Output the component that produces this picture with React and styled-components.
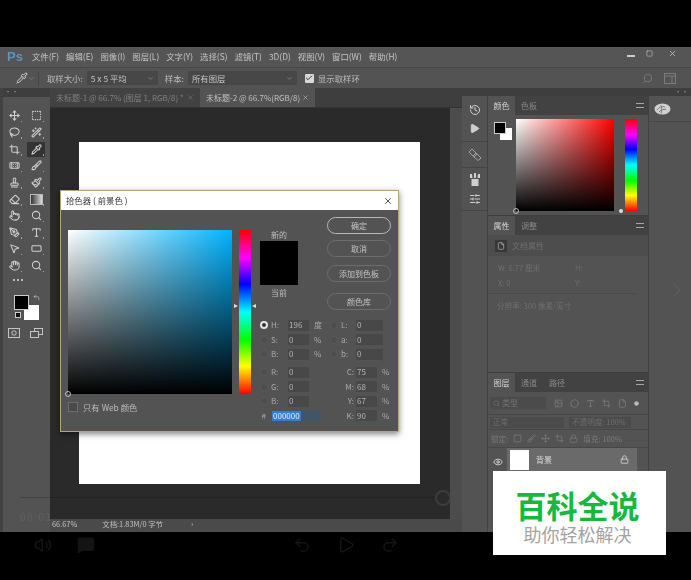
import * as React from 'react';
import styled, { createGlobalStyle } from 'styled-components';
import {
    Move, SquareDashed, Lasso, WandSparkles, Crop, Pipette, Bandage, Brush, Stamp, Paintbrush, Eraser,
    Pointer, Search, PenTool, Type, MousePointer2, RectangleHorizontal, Hand, Check, X, ChevronDown,
    Volume2, MessageSquare, Undo2, Redo2, Play, ChevronRight, Eye, Lock, File, Image, Circle, Square,
    History, SlidersHorizontal, CornerUpLeft,
} from 'lucide-react';

const cjk = `'Noto Sans CJK SC', 'Liberation Sans', sans-serif`;

const hueGradient = 'linear-gradient(180deg, #ff0000 0%, #ff00ff 17%, #0000ff 33%, #00ffff 50%, #00ff00 67%, #ffff00 83%, #ff0000 100%)';

const GlobalStyle = createGlobalStyle`
    html, body { margin: 0; padding: 0; background: #000; }
    body { font-family: ${cjk}; }
`;

const Page = styled.div`
    position: relative;
    width: 691px;
    height: 580px;
    background: #000;
    overflow: hidden;
    display: flex;
    flex-direction: column;
`;

const Shot = styled.div`
    position: relative;
    flex: none;
    padding-top: 47px;
    filter: blur(0.4px);
`;

const AppWindow = styled.div`
    height: 485px;
    display: flex;
    flex-direction: column;
    background: #535353;
    color: #c8c8c8;
    font-size: 8px;
    line-height: 1;
`;

const TitleBar = styled.div`
    height: 20px;
    flex: none;
    display: flex;
    align-items: center;
    padding: 0 0 2px 7px;
    box-sizing: border-box;
    background: #555;
`;

const PsLogo = styled.span`
    width: 25px;
    font: bold 13px 'Liberation Sans', sans-serif;
    color: #5f93ba;
`;

const MenuItem = styled.span`
    margin-right: 7px;
    font-size: 8.4px;
    color: #c4c4c4;
`;

const WindowButtons = styled.div`
    margin-left: auto;
    display: flex;
    align-items: center;
    gap: 11px;
    padding: 0 14px 6px 0;
    color: #c8c8c8;
`;

const MinimizeBar = styled.span`
    width: 8px;
    height: 2px;
    margin-top: 5px;
    background: #ccc;
`;

const CloseIcon = styled(X)`
    margin-left: 4px;
`;

const OptionsBar = styled.div`
    height: 21px;
    flex: none;
    display: flex;
    align-items: center;
    padding-left: 16px;
    background: #535353;
    border-top: 1px solid #484848;
    box-sizing: border-box;
`;

const OptionLabel = styled.span`
    margin: 0 4px 0 ${(p) => p.$left || 0}px;
    font-size: 8.4px;
    color: #bcbcbc;
    white-space: nowrap;
`;

const OptionSelect = styled.div`
    width: ${(p) => p.$width}px;
    height: 14px;
    box-sizing: border-box;
    display: flex;
    align-items: center;
    justify-content: space-between;
    padding: 0 4px;
    background: #474747;
    font-size: 8.4px;
    color: #c4c4c4;
`;

const OptionDivider = styled.span`
    width: 1px;
    height: 15px;
    margin: 0 8px 0 3px;
    background: #474747;
`;

const CheckBox = styled.span`
    width: 9px;
    height: 9px;
    margin: 0 4px 0 8px;
    display: flex;
    align-items: center;
    justify-content: center;
    border-radius: 1px;
    background: #d8d8d8;
    color: #333;
`;

const OptionTools = styled.div`
    margin-left: auto;
    display: flex;
    align-items: center;
    gap: 11px;
    padding-right: 15px;
    color: #7c7c7c;
`;

const FlippedSearch = styled(Search)`
    transform: scaleX(-1);
`;

const Workspace = styled.div`
    flex: 1;
    min-height: 0;
    display: flex;
    background: #424242;
`;

const ToolColumn = styled.div`
    width: 47px;
    flex: none;
    margin-left: 3px;
    background: #535353;
    display: flex;
    flex-direction: column;
`;

const Grip = styled.div`
    height: ${(p) => p.$height}px;
    flex: none;
    background: #3e3e3e;
    color: #aaa;
    font-size: 6px;
    line-height: 8px;
    text-align: ${(p) => p.$align || 'left'};
    letter-spacing: 1px;
    padding: 0 2px;
`;

const ToolGrid = styled.div`
    display: grid;
    grid-template-columns: 22px 22px;
    grid-auto-rows: 16.65px;
    padding-top: 10.5px;
`;

const ToolCell = styled.div`
    display: flex;
    align-items: center;
    justify-content: center;
    color: #d0d0d0;
    & > span {
        position: relative;
        width: 18px;
        height: 15px;
        display: flex;
        align-items: center;
        justify-content: center;
        background: ${(p) => (p.$active ? '#333' : 'transparent')};
    }
    & > span::after {
        content: '';
        position: absolute;
        right: 1px;
        bottom: 1px;
        width: 1.5px;
        height: 1.5px;
        background: #a0a0a0;
    }
`;

const GradientTool = styled.span`
    width: 11px;
    height: 9px;
    background: linear-gradient(90deg, #333, #ddd);
    border: 1px solid #bbb;
`;

const MoreDots = styled.div`
    height: 12px;
    padding-left: 10px;
    display: flex;
    gap: 2px;
    align-items: center;
    & > i {
        width: 2px;
        height: 2px;
        background: #ddd;
        border-radius: 50%;
    }
`;

const ColorWell = styled.div`
    position: relative;
    height: 27px;
    margin-top: 10px;
    flex: none;
`;

const Swatch = styled.div`
    position: absolute;
    left: ${(p) => p.$x}px;
    top: ${(p) => p.$y}px;
    width: ${(p) => p.$size}px;
    height: ${(p) => p.$size}px;
    background: ${(p) => p.$color};
    border: ${(p) => (p.$color === '#000' ? '1px solid #ccc' : 'none')};
    box-sizing: border-box;
`;

const SwapMark = styled.span`
    position: absolute;
    left: 30px;
    top: -2px;
    color: #ccc;
    line-height: 0;
`;

const ResetMark = styled.span`
    position: absolute;
    left: 12px;
    top: 16px;
    width: 6px;
    height: 6px;
    background: #111;
    border: 1px solid #ccc;
    box-sizing: border-box;
`;

const ModeRow = styled.div`
    margin-top: 5px;
    display: grid;
    grid-template-columns: 22px 22px;
    justify-items: center;
    color: #c4c4c4;
`;

const Center = styled.div`
    width: 412px;
    flex: none;
    display: flex;
    flex-direction: column;
`;

const TabRow = styled.div`
    height: 20px;
    flex: none;
    display: flex;
    align-items: stretch;
    background: #3e3e3e;
    border-bottom: 1px solid #333;
    box-sizing: border-box;
`;

const DocTab = styled.div`
    width: ${(p) => p.$width}px;
    box-sizing: border-box;
    display: flex;
    align-items: center;
    justify-content: space-between;
    padding: 0 6px;
    font-size: 8px;
    white-space: nowrap;
    background: ${(p) => (p.$active ? '#535353' : '#424242')};
    color: ${(p) => (p.$active ? '#c0c0c0' : '#808080')};
`;

const CanvasRow = styled.div`
    flex: 1;
    min-height: 0;
    display: flex;
    background: #4c4c4c;
`;

const CanvasArea = styled.div`
    width: 400px;
    box-sizing: border-box;
    padding: 34px 0 0 29px;
    background: #2a2a2a;
`;

const Document = styled.div`
    width: 341px;
    height: 342px;
    background: #fff;
`;

const StatusBar = styled.div`
    height: 13px;
    flex: none;
    display: flex;
    align-items: center;
    padding-bottom: 3px;
    box-sizing: border-box;
    background: #4a4a4a;
    font-size: 7.4px;
    color: #c0c0c0;
`;

const StatusText = styled.span`
    margin-left: ${(p) => p.$left}px;
`;

const RightDock = styled.div`
    flex: 1;
    min-width: 0;
    display: flex;
    flex-direction: column;
`;

const DockColumns = styled.div`
    flex: 1;
    min-height: 0;
    display: flex;
    gap: 1px;
`;

const IconStrip = styled.div`
    width: 25px;
    flex: none;
    background: #535353;
    display: flex;
    flex-direction: column;
`;

const StripGroup = styled.div`
    height: ${(p) => p.$height}px;
    display: flex;
    flex-direction: column;
    align-items: center;
    justify-content: center;
    gap: 7px;
    border-bottom: 1px solid #454545;
    color: #cfcfcf;
    box-sizing: border-box;
`;

const PanelColumn = styled.div`
    width: 160px;
    flex: none;
    display: flex;
    flex-direction: column;
    gap: 1px;
    background: #3e3e3e;
`;

const Panel = styled.div`
    height: ${(p) => (p.$height ? `${p.$height}px` : 'auto')};
    flex: ${(p) => (p.$height ? 'none' : 1)};
    min-height: 0;
    background: #535353;
    display: flex;
    flex-direction: column;
    overflow: hidden;
`;

const PanelHeader = styled.div`
    height: 19px;
    flex: none;
    display: flex;
    align-items: stretch;
    background: #424242;
    color: #8e8e8e;
`;

const PanelTab = styled.div`
    width: ${(p) => (p.$active ? 27 : 'auto')}px;
    padding: ${(p) => (p.$active ? '0' : '0 6px')};
    display: flex;
    align-items: center;
    justify-content: center;
    font-size: 8px;
    background: ${(p) => (p.$active ? '#535353' : 'transparent')};
    color: ${(p) => (p.$active ? '#d4d4d4' : '#888')};
`;

const PanelMenu = styled.div`
    margin-left: auto;
    width: 8px;
    align-self: center;
    margin-right: 4px;
    height: 5px;
    border-top: 1.5px solid #a8a8a8;
    border-bottom: 1.5px solid #a8a8a8;
    box-sizing: border-box;
`;

const ColorBody = styled.div`
    position: relative;
    flex: 1;
    display: flex;
    padding: 4px 0 0 28px;
`;

const ColorField = styled.div`
    position: relative;
    width: 98px;
    height: 92px;
    background: linear-gradient(180deg, transparent, #000), linear-gradient(90deg, #fff, #ff0000);
`;

const HueBar = styled.div`
    position: relative;
    width: ${(p) => p.$width}px;
    height: ${(p) => p.$height}px;
    margin-left: ${(p) => p.$left}px;
    flex: none;
    background: ${hueGradient};
`;

const HueDot = styled.span`
    position: absolute;
    left: -6px;
    bottom: -2px;
    width: 4px;
    height: 4px;
    border-radius: 50%;
    background: #ddd;
`;

const PropsRow = styled.div`
    height: 21px;
    flex: none;
    display: flex;
    align-items: center;
    gap: 5px;
    padding-left: 7px;
    background: #4d4d4d;
    color: #6f6f6f;
    font-size: 8px;
`;

const DocBadge = styled.span`
    width: 12px;
    height: 12px;
    display: flex;
    align-items: center;
    justify-content: center;
    background: #383838;
    color: #bbb;
`;

const DimText = styled.div`
    display: grid;
    grid-template-columns: 77px 1fr;
    row-gap: 7px;
    padding: 8px 0 7px 10px;
    margin-right: 12px;
    border-bottom: 1px solid #4a4a4a;
    color: #6e6e6e;
    font-size: 7.6px;
`;

const DimLine = styled.div`
    padding: 8px 0 0 9px;
    color: #6e6e6e;
    font-size: 7.6px;
`;

const LayerFilter = styled.div`
    height: 23px;
    flex: none;
    display: flex;
    align-items: center;
    padding-left: 2px;
    border-bottom: 1px solid #474747;
    box-sizing: border-box;
    color: #7c7c7c;
`;

const FilterSelect = styled.div`
    width: 56px;
    height: 12px;
    margin-right: 8px;
    padding-left: 3px;
    box-sizing: border-box;
    display: flex;
    align-items: center;
    gap: 2px;
    background: #4b4b4b;
    font-size: 8px;
    color: #767676;
`;

const FilterIcons = styled.div`
    display: flex;
    gap: 7px;
    align-items: center;
`;

const BlendRow = styled.div`
    height: 15px;
    flex: none;
    box-sizing: border-box;
    display: flex;
    align-items: center;
    padding-left: 2px;
    color: #6e6e6e;
    font-size: 7.6px;
    border-bottom: 1px solid #474747;
`;

const BlendField = styled.span`
    width: ${(p) => p.$width}px;
    height: 11px;
    margin-right: ${(p) => p.$right || 0}px;
    display: flex;
    align-items: center;
    padding-left: 3px;
    box-sizing: border-box;
    background: #4b4b4b;
    white-space: nowrap;
`;

const LockRow = styled.div`
    height: 18px;
    flex: none;
    box-sizing: border-box;
    display: flex;
    align-items: center;
    padding-left: 3px;
    gap: 5px;
    color: #7a7a7a;
    font-size: 7.6px;
    border-bottom: 1px solid #474747;
`;

const LayerRow = styled.div`
    height: 28px;
    flex: none;
    display: flex;
    align-items: center;
    padding-left: 5px;
    color: #ddd;
`;

const LayerBody = styled.div`
    width: 130px;
    height: 100%;
    margin-left: 4px;
    padding: 0 8px 5px 3px;
    box-sizing: border-box;
    display: flex;
    align-items: center;
    gap: 7px;
    background: #6a6a6a;
    font-size: 8px;
`;

const LayerThumb = styled.span`
    width: 19px;
    height: 20px;
    background: #fff;
`;

const LayerLock = styled(Lock)`
    margin-left: auto;
`;

const LibraryColumn = styled.div`
    flex: 1;
    background: #535353;
`;

const LibraryButton = styled.div`
    height: 26px;
    display: flex;
    align-items: center;
    padding-left: 5px;
    box-sizing: border-box;
    border-bottom: 1px solid #474747;
`;

/* 拾色器 */
const Dialog = styled.div`
    position: absolute;
    left: 60px;
    top: 190px;
    width: 339px;
    height: 242px;
    box-sizing: border-box;
    border: 1px solid #b6a47c;
    background: #535353;
    box-shadow: 0 2px 6px rgba(0, 0, 0, 0.5);
    display: flex;
    flex-direction: column;
    color: #bdbdbd;
    font-size: 8px;
    line-height: 1;
`;

const DialogTitle = styled.div`
    height: 19px;
    flex: none;
    display: flex;
    align-items: center;
    justify-content: space-between;
    padding: 0 5px;
    background: #fff;
    color: #333;
    font-size: 8.4px;
`;

const DialogBody = styled.div`
    flex: 1;
    display: flex;
    padding-left: 7px;
`;

const PickerColumn = styled.div`
    width: 164px;
    flex: none;
    padding-top: 20px;
`;

const PickerField = styled.div`
    position: relative;
    height: 164px;
    background: linear-gradient(180deg, transparent, #000), linear-gradient(90deg, #fff, #00b3ff);
`;

const PickerRing = styled.span`
    position: absolute;
    left: -3px;
    bottom: -3px;
    width: 6px;
    height: 6px;
    border: 1px solid #bbb;
    border-radius: 50%;
    box-sizing: border-box;
`;

const WebOption = styled.div`
    margin-top: 8px;
    display: flex;
    align-items: center;
    gap: 5px;
    font-size: 8.4px;
`;

const EmptyCheck = styled.span`
    width: 8px;
    height: 8px;
    border: 1px solid #6c6c6c;
    background: #4a4a4a;
`;

const HueWrap = styled.div`
    position: relative;
    width: 12px;
    height: 164px;
    margin: 20px 9px 0 7px;
    flex: none;
    background: ${hueGradient};
    border-radius: 1px;
`;

const HueArrow = styled.span`
    position: absolute;
    top: 74px;
    ${(p) => (p.$side === 'left' ? 'left: -5px;' : 'right: -5px;')}
    width: 0;
    height: 0;
    border-top: 2.5px solid transparent;
    border-bottom: 2.5px solid transparent;
    ${(p) => (p.$side === 'left' ? 'border-left: 4px solid #ddd;' : 'border-right: 4px solid #ddd;')}
`;

const ControlColumn = styled.div`
    flex: 1;
    padding: 7px 7px 0 0;
`;

const ControlTop = styled.div`
    height: 101px;
    display: flex;
    justify-content: space-between;
`;

const PreviewColumn = styled.div`
    width: 38px;
    padding-top: 14px;
    display: flex;
    flex-direction: column;
    align-items: center;
    gap: 2px;
    font-size: 8px;
`;

const PreviewBox = styled.div`
    width: 38px;
    height: 44px;
    background: #000;
    margin-bottom: 2px;
`;

const ButtonColumn = styled.div`
    width: 64px;
    display: flex;
    flex-direction: column;
`;

const RoundButton = styled.div`
    height: 17px;
    margin-bottom: ${(p) => p.$gap || 0}px;
    box-sizing: border-box;
    display: flex;
    align-items: center;
    justify-content: center;
    border: 1px solid ${(p) => (p.$primary ? '#b8b8b8' : '#6d6d6d')};
    border-radius: 9px;
    font-size: 8px;
    color: #c4c4c4;
    white-space: nowrap;
`;

const ValueGrid = styled.div`
    display: flex;
    justify-content: space-between;
`;

const ValueColumn = styled.div`
    width: ${(p) => p.$width}px;
`;

const ValueGap = styled.div`
    height: 3.5px;
`;

const ValueRow = styled.div`
    height: 14.5px;
    display: flex;
    align-items: center;
    color: #a8a8a8;
    font-size: 8px;
`;

const Radio = styled.span`
    width: 8px;
    height: 8px;
    margin-right: 3px;
    flex: none;
    box-sizing: border-box;
    border-radius: 50%;
    background: ${(p) => (p.$on ? '#333' : '#4d4d4d')};
    border: ${(p) => (p.$on ? '2px solid #e6e6e6' : '1px solid #5a5a5a')};
`;

const ValueLabel = styled.span`
    width: ${(p) => p.$width}px;
    flex: none;
    text-align: ${(p) => p.$align || 'left'};
`;

const ValueInput = styled.span`
    width: ${(p) => p.$width}px;
    height: 11px;
    margin: 0 3px 0 ${(p) => p.$left || 0}px;
    padding-left: 1px;
    box-sizing: border-box;
    flex: none;
    display: flex;
    align-items: center;
    background: #484848;
    color: #b4b4b4;
`;

const ValueUnit = styled.span`
    margin-left: ${(p) => p.$left || 0}px;
`;

const HexInput = styled.span`
    width: 49px;
    height: 11px;
    margin-left: 6px;
    background: #445467;
    display: flex;
    align-items: center;
`;

const HexSelection = styled.span`
    padding: 1px;
    background: #2f7fd4;
    color: #e8f2ff;
`;

/* 上面盖着的视频播放控件 */
const ProgressLine = styled.div`
    position: absolute;
    left: 20px;
    top: 497px;
    width: 415px;
    height: 1px;
    background: rgba(0, 0, 0, 0.18);
`;

const ProgressKnob = styled.div`
    position: absolute;
    left: 435px;
    top: 490px;
    width: 16px;
    height: 16px;
    box-sizing: border-box;
    border: 2px solid rgba(70, 70, 70, 0.7);
    border-radius: 50%;
`;

const TimeText = styled.div`
    position: absolute;
    left: 20px;
    top: 509px;
    color: rgba(120, 120, 120, 0.35);
    font-size: 10px;
    letter-spacing: 1.5px;
`;

const NextArrow = styled.div`
    position: absolute;
    left: 665px;
    top: 278px;
    color: rgba(120, 120, 120, 0.35);
`;

const PlayerBar = styled.div`
    flex: 1;
    display: flex;
    align-items: center;
    padding: 0 0 22px 34px;
    color: #141414;
`;

const PlayerGroup = styled.div`
    display: flex;
    gap: ${(p) => p.$gap}px;
    margin-left: ${(p) => p.$left || 0}px;
`;

const Watermark = styled.div`
    position: absolute;
    left: 493px;
    top: 471px;
    width: 173px;
    height: 84px;
    background: #fff;
    display: flex;
    flex-direction: column;
    align-items: center;
    padding: 16px 4px 0 0;
    box-sizing: border-box;
`;

const WatermarkTitle = styled.div`
    font: bold 31px/35px ${cjk};
    color: #17b83e;
`;

const WatermarkSub = styled.div`
    font: 18px/24px ${cjk};
    color: #a3a3a3;
`;

const MaskIcon = () => (
    <svg width="12" height="10" viewBox="0 0 12 10" fill="none" stroke="currentColor">
        <rect x="0.5" y="0.5" width="11" height="9" />
        <circle cx="6" cy="5" r="2.2" />
    </svg>
);

const ScreenIcon = () => (
    <svg width="13" height="10" viewBox="0 0 13 10" fill="#535353" stroke="currentColor">
        <rect x="4.5" y="0.5" width="8" height="6" />
        <rect x="0.5" y="3.5" width="8" height="6" />
    </svg>
);

const WorkspaceIcon = () => (
    <svg width="12" height="11" viewBox="0 0 12 11" fill="none" stroke="currentColor">
        <rect x="0.5" y="0.5" width="11" height="10" />
        <path d="M0.5 3h11M8 3v7.5" />
    </svg>
);

const ArrangeIcon = () => (
    <svg width="14" height="13" viewBox="0 0 14 13" fill="none" stroke="#a2a2a2">
        <path d="M1 4l3-3 5 5-3 3zM5 8l3-3 5 5-3 2.5z" />
    </svg>
);

const BrushSetIcon = () => (
    <svg width="12" height="13" viewBox="0 0 12 13" fill="currentColor">
        <path d="M1 1l2 0 .5 4H1zM5 0h2v5H5zM9 1h2l0 4H8.5zM2.5 6h7v7h-7z" />
    </svg>
);

const CloudIcon = () => (
    <svg width="17" height="12" viewBox="0 0 17 12">
        <ellipse cx="8.5" cy="6" rx="8" ry="5.5" fill="#cfcfcf" />
        <path d="M3 7c2-3 5-4 8-3M5 9c2-2 4-3 7-2.500M7 2.500c1 2 1 5 0 8" fill="none" stroke="#6a6a6a" strokeWidth="0.8" />
    </svg>
);

const tools = [
    [Move], [SquareDashed], [Lasso], [WandSparkles], [Crop], [Pipette, true], [Bandage], [Brush],
    [Stamp], [Paintbrush], [Eraser], ['gradient'], [Pointer], [Search], [PenTool], [Type],
    [MousePointer2], [RectangleHorizontal], [Hand], [Search],
];

const menus = ['文件(F)', '编辑(E)', '图像(I)', '图层(L)', '文字(Y)', '选择(S)', '滤镜(T)', '3D(D)', '视图(V)', '窗口(W)', '帮助(H)'];

const App = () => {
    return (
        <Page>
            <GlobalStyle />
            <Shot>
                <AppWindow>
                    <TitleBar>
                        <PsLogo>Ps</PsLogo>
                        {menus.map((m) => (
                            <MenuItem key={m}>{m}</MenuItem>
                        ))}
                        <WindowButtons>
                            <MinimizeBar />
                            <Square size={7} />
                            <CloseIcon size={9} />
                        </WindowButtons>
                    </TitleBar>
                    <OptionsBar>
                        <Pipette size={12} color="#d4d4d4" />
                        <ChevronDown size={7} color="#999" />
                        <OptionDivider />
                        <OptionLabel>取样大小:</OptionLabel>
                        <OptionSelect $width={71}>
                            5 x 5 平均
                            <ChevronDown size={7} color="#999" />
                        </OptionSelect>
                        <OptionLabel $left={7}>样本:</OptionLabel>
                        <OptionSelect $width={109}>
                            所有图层
                            <ChevronDown size={7} color="#999" />
                        </OptionSelect>
                        <CheckBox>
                            <Check size={8} strokeWidth={3} />
                        </CheckBox>
                        <OptionLabel>显示取样环</OptionLabel>
                        <OptionTools>
                            <FlippedSearch size={11} />
                            <WorkspaceIcon />
                        </OptionTools>
                    </OptionsBar>
                    <Workspace>
                        <ToolColumn>
                            <Grip $height={9}>··</Grip>
                            <ToolGrid>
                                {tools.map(([Icon, active], i) => (
                                    <ToolCell key={i} $active={active}>
                                        <span>
                                            {Icon === 'gradient' ? <GradientTool /> : <Icon size={11} strokeWidth={2.2} />}
                                        </span>
                                    </ToolCell>
                                ))}
                            </ToolGrid>
                            <MoreDots>
                                <i />
                                <i />
                                <i />
                            </MoreDots>
                            <ColorWell>
                                <Swatch $x={21} $y={9} $size={15} $color="#fff" />
                                <Swatch $x={11} $y={-1} $size={15} $color="#000" />
                                <ResetMark />
                                <SwapMark>
                                    <CornerUpLeft size={7} />
                                </SwapMark>
                            </ColorWell>
                            <ModeRow>
                                <MaskIcon />
                                <ScreenIcon />
                            </ModeRow>
                        </ToolColumn>
                        <Center>
                            <TabRow>
                                <DocTab $width={150}>
                                    未标题-1 @ 66.7% (图层 1, RGB/8) *<X size={7} />
                                </DocTab>
                                <DocTab $width={115} $active>
                                    未标题-2 @ 66.7%(RGB/8)<X size={7} />
                                </DocTab>
                            </TabRow>
                            <CanvasRow>
                                <CanvasArea>
                                    <Document />
                                </CanvasArea>
                            </CanvasRow>
                            <StatusBar>
                                <StatusText $left={2}>66.67%</StatusText>
                                <StatusText $left={25}>文档:1.83M/0 字节</StatusText>
                                <StatusText $left={28}>›</StatusText>
                            </StatusBar>
                        </Center>
                        <RightDock>
                            <Grip $height={8} $align="right">
                                ··
                            </Grip>
                            <DockColumns>
                                <IconStrip>
                                    <StripGroup $height={46}>
                                        <History size={12} />
                                        <Play size={11} fill="currentColor" />
                                    </StripGroup>
                                    <StripGroup $height={26}>
                                        <ArrangeIcon />
                                    </StripGroup>
                                    <StripGroup $height={43}>
                                        <BrushSetIcon />
                                        <SlidersHorizontal size={12} />
                                    </StripGroup>
                                </IconStrip>
                                <PanelColumn>
                                    <Panel $height={119}>
                                        <PanelHeader>
                                            <PanelTab $active>颜色</PanelTab>
                                            <PanelTab>色板</PanelTab>
                                            <PanelMenu />
                                        </PanelHeader>
                                        <ColorBody>
                                            <Swatch $x={12} $y={13} $size={12} $color="#fff" />
                                            <Swatch $x={6} $y={7} $size={12} $color="#000" />
                                            <ColorField>
                                                <PickerRing />
                                            </ColorField>
                                            <HueBar $width={12} $height={92} $left={11}>
                                                <HueDot />
                                            </HueBar>
                                        </ColorBody>
                                    </Panel>
                                    <Panel $height={156}>
                                        <PanelHeader>
                                            <PanelTab $active>属性</PanelTab>
                                            <PanelTab>调整</PanelTab>
                                            <PanelMenu />
                                        </PanelHeader>
                                        <PropsRow>
                                            <DocBadge>
                                                <File size={8} />
                                            </DocBadge>
                                            文档属性
                                        </PropsRow>
                                        <DimText>
                                            <span>W: 6.77 厘米</span>
                                            <span>H:</span>
                                            <span>X: 0</span>
                                            <span>Y:</span>
                                        </DimText>
                                        <DimLine>分辨率: 300 像素/英寸</DimLine>
                                    </Panel>
                                    <Panel>
                                        <PanelHeader>
                                            <PanelTab $active>图层</PanelTab>
                                            <PanelTab>通道</PanelTab>
                                            <PanelTab>路径</PanelTab>
                                            <PanelMenu />
                                        </PanelHeader>
                                        <LayerFilter>
                                            <FilterSelect>
                                                <Search size={7} />
                                                类型
                                            </FilterSelect>
                                            <FilterIcons>
                                                <Image size={9} />
                                                <Circle size={9} />
                                                <Type size={9} />
                                                <Crop size={9} />
                                                <File size={9} />
                                                <Circle size={5} fill="#bbb" color="#bbb" />
                                            </FilterIcons>
                                        </LayerFilter>
                                        <BlendRow>
                                            <BlendField $width={74} $right={5}>
                                                正常
                                            </BlendField>
                                            <BlendField $width={62}>不透明度: 100%</BlendField>
                                        </BlendRow>
                                        <LockRow>
                                            锁定:
                                            <Square size={9} />
                                            <Brush size={9} />
                                            <Move size={9} />
                                            <Crop size={9} />
                                            <Lock size={9} />
                                            填充: 100%
                                        </LockRow>
                                        <LayerRow>
                                            <Eye size={10} />
                                            <LayerBody>
                                                <LayerThumb />
                                                背景
                                                <LayerLock size={9} />
                                            </LayerBody>
                                        </LayerRow>
                                    </Panel>
                                </PanelColumn>
                                <LibraryColumn>
                                    <LibraryButton>
                                        <CloudIcon />
                                    </LibraryButton>
                                </LibraryColumn>
                            </DockColumns>
                        </RightDock>
                    </Workspace>
                </AppWindow>

                <Dialog>
                    <DialogTitle>
                        拾色器 ( 前景色 )
                        <X size={10} />
                    </DialogTitle>
                    <DialogBody>
                        <PickerColumn>
                            <PickerField>
                                <PickerRing />
                            </PickerField>
                            <WebOption>
                                <EmptyCheck />
                                只有 Web 颜色
                            </WebOption>
                        </PickerColumn>
                        <HueWrap>
                            <HueArrow $side="left" />
                            <HueArrow $side="right" />
                        </HueWrap>
                        <ControlColumn>
                            <ControlTop>
                                <PreviewColumn>
                                    新的
                                    <PreviewBox />
                                    当前
                                </PreviewColumn>
                                <ButtonColumn>
                                    <RoundButton $primary $gap={6}>
                                        确定
                                    </RoundButton>
                                    <RoundButton $gap={8}>取消</RoundButton>
                                    <RoundButton $gap={11}>添加到色板</RoundButton>
                                    <RoundButton>颜色库</RoundButton>
                                </ButtonColumn>
                            </ControlTop>
                            <ValueGrid>
                                <ValueColumn $width={66}>
                                    {[['H:', '196', '度', true], ['S:', '0', '%'], ['B:', '0', '%']].map(([l, v, u, on]) => (
                                        <ValueRow key={l}>
                                            <Radio $on={on} />
                                            <ValueLabel $width={17}>{l}</ValueLabel>
                                            <ValueInput $width={21}>{v}</ValueInput>
                                            <ValueUnit $left={2}>{u}</ValueUnit>
                                        </ValueRow>
                                    ))}
                                    <ValueGap />
                                    {[['R:', '0'], ['G:', '0'], ['B:', '0']].map(([l, v]) => (
                                        <ValueRow key={l}>
                                            <Radio />
                                            <ValueLabel $width={17}>{l}</ValueLabel>
                                            <ValueInput $width={21}>{v}</ValueInput>
                                        </ValueRow>
                                    ))}
                                    <ValueRow>
                                        <ValueLabel $width={6} $align="right">
                                            #
                                        </ValueLabel>
                                        <HexInput>
                                            <HexSelection>000000</HexSelection>
                                        </HexInput>
                                    </ValueRow>
                                </ValueColumn>
                                <ValueColumn $width={61}>
                                    {[['L:', '0'], ['a:', '0'], ['b:', '0']].map(([l, v]) => (
                                        <ValueRow key={l}>
                                            <Radio />
                                            <ValueLabel $width={15}>{l}</ValueLabel>
                                            <ValueInput $width={27}>{v}</ValueInput>
                                        </ValueRow>
                                    ))}
                                    <ValueGap />
                                    {[['C:', '75'], ['M:', '68'], ['Y:', '67'], ['K:', '90']].map(([l, v]) => (
                                        <ValueRow key={l}>
                                            <ValueLabel $width={24} $align="right">
                                                {l}
                                            </ValueLabel>
                                            <ValueInput $width={21} $left={2}>
                                                {v}
                                            </ValueInput>
                                            <ValueUnit $left={2}>%</ValueUnit>
                                        </ValueRow>
                                    ))}
                                </ValueColumn>
                            </ValueGrid>
                        </ControlColumn>
                    </DialogBody>
                </Dialog>

                <ProgressLine />
                <ProgressKnob />
                <TimeText>00:01</TimeText>
                <NextArrow>
                    <ChevronRight size={24} strokeWidth={1} />
                </NextArrow>
            </Shot>
            <PlayerBar>
                <PlayerGroup $gap={25}>
                    <Volume2 size={18} />
                    <MessageSquare size={18} fill="currentColor" />
                </PlayerGroup>
                <PlayerGroup $gap={26} $left={198}>
                    <Undo2 size={18} />
                    <Play size={18} />
                    <Redo2 size={18} />
                </PlayerGroup>
            </PlayerBar>
            <Watermark>
                <WatermarkTitle>百科全说</WatermarkTitle>
                <WatermarkSub>助你轻松解决</WatermarkSub>
            </Watermark>
        </Page>
    );
};

export default App;
